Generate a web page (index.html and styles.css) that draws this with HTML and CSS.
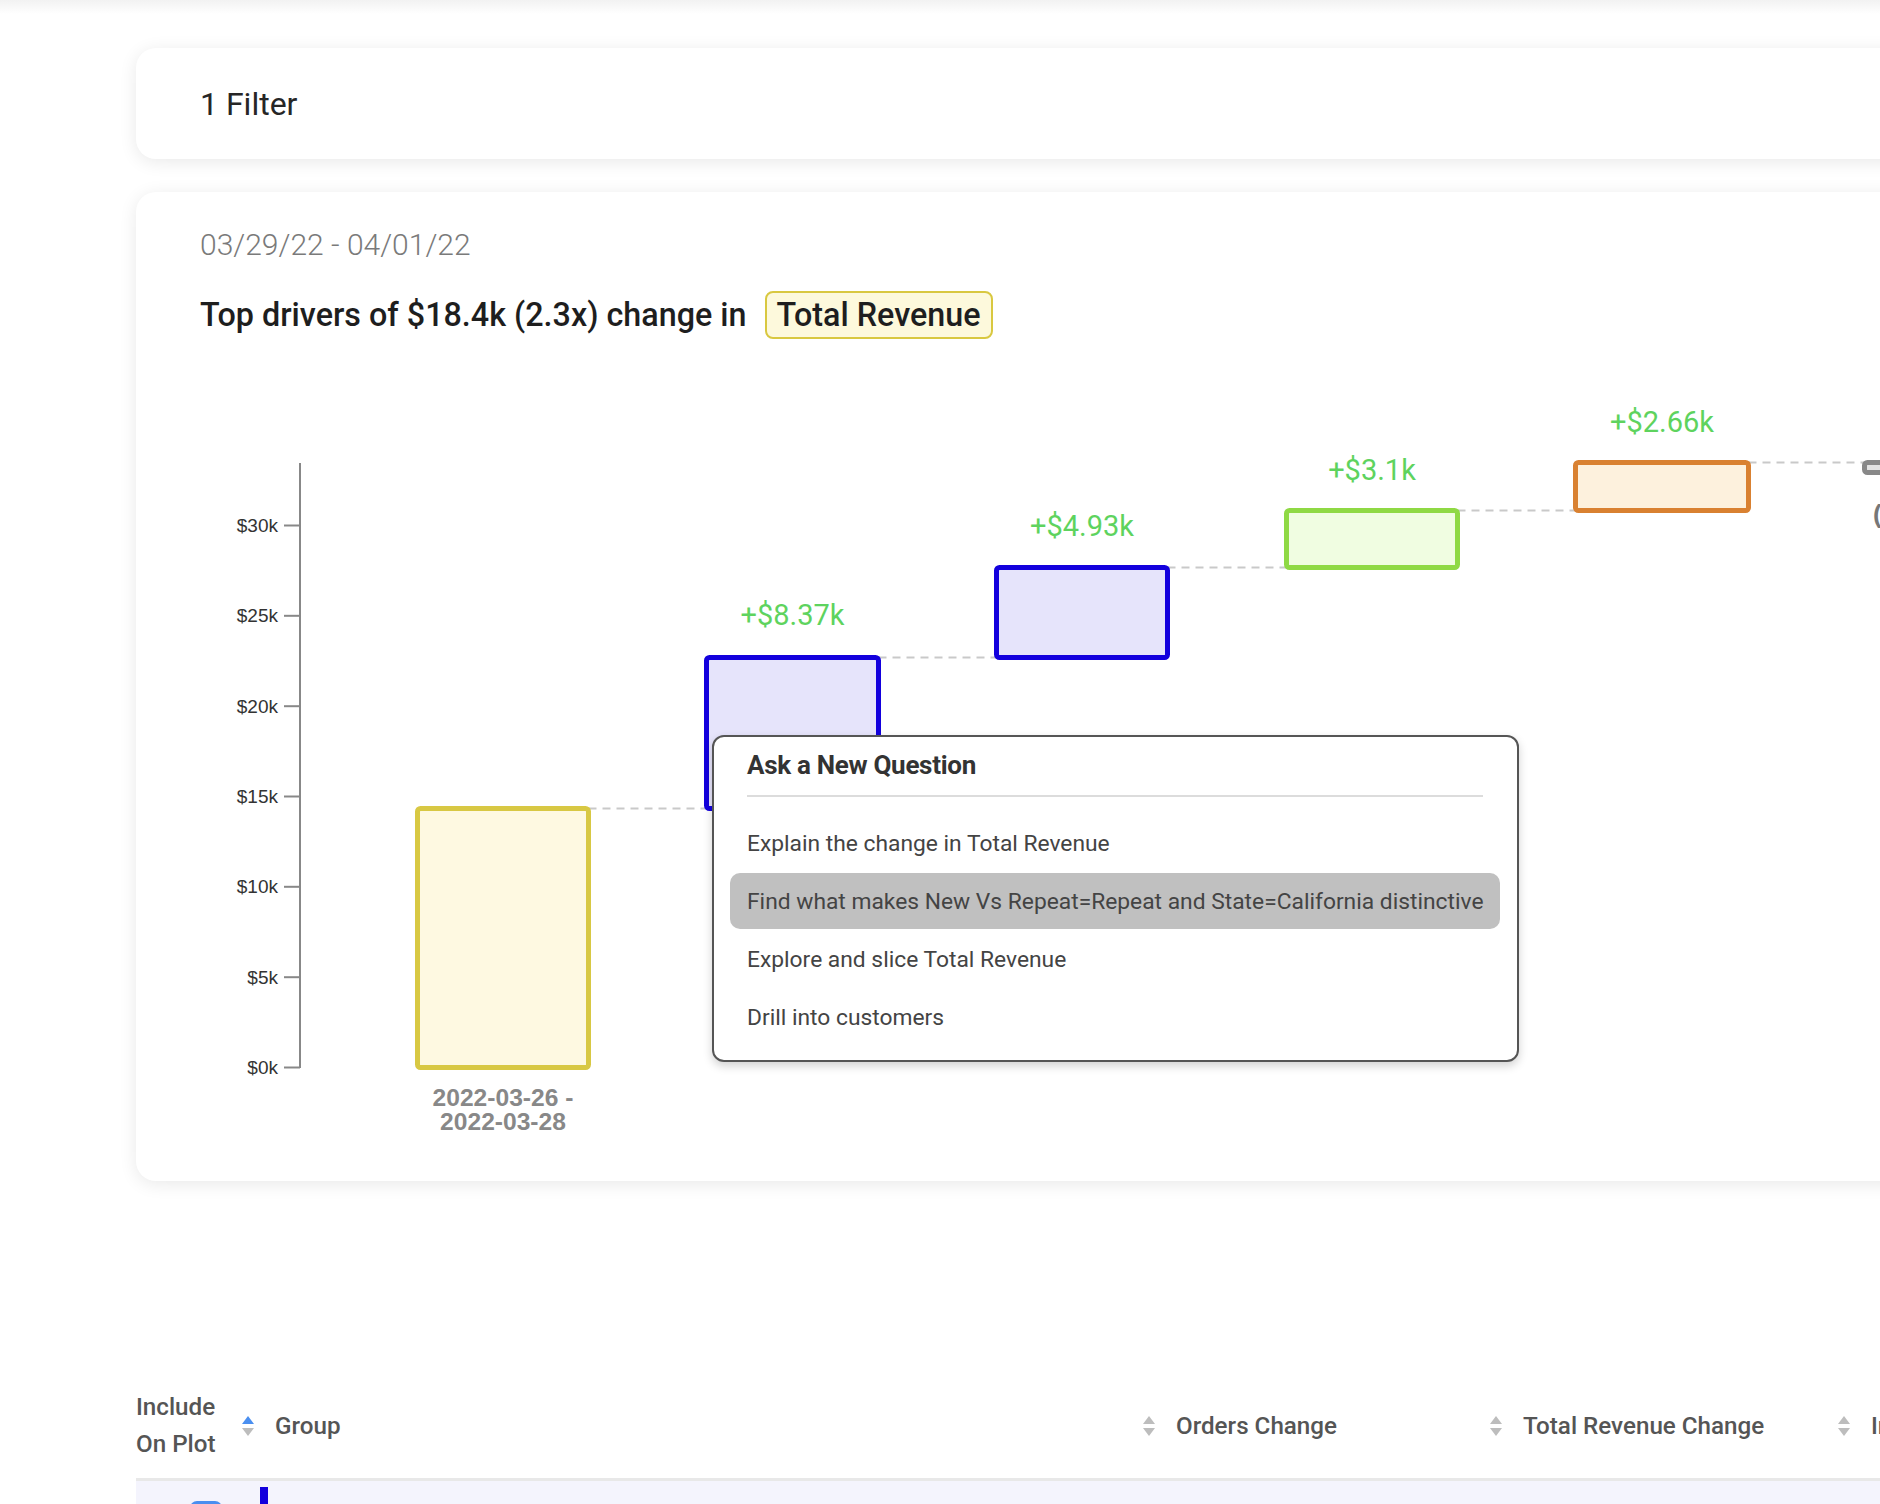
FILE: index.html
```html
<!DOCTYPE html>
<html lang="en">
<head>
<meta charset="utf-8">
<title>Top drivers</title>
<link rel="stylesheet" href="styles.css">
</head>
<body>
<div class="top-fade"></div>
<main class="page">
  <section class="card filter-card">
    <span class="filter-label">1 Filter</span>
  </section>

  <section class="card chart-card">
    <div class="card-head">
      <div class="date-range">03/29/22 - 04/01/22</div>
      <h1 class="title">
        <span>Top drivers of $18.4k (2.3x) change in</span>
        <span class="metric-badge">Total Revenue</span>
      </h1>
    </div>

    <svg class="waterfall" width="1800" height="789" viewBox="0 0 1800 789">
      <g class="axis">
        <line x1="164" y1="71" x2="164" y2="676" />
        <line x1="148" y1="675.5" x2="164" y2="675.5" />
        <line x1="148" y1="585.2" x2="164" y2="585.2" />
        <line x1="148" y1="494.8" x2="164" y2="494.8" />
        <line x1="148" y1="404.5" x2="164" y2="404.5" />
        <line x1="148" y1="314.2" x2="164" y2="314.2" />
        <line x1="148" y1="223.8" x2="164" y2="223.8" />
        <line x1="148" y1="133.5" x2="164" y2="133.5" />
      </g>
      <g class="tick-labels">
        <text x="142" y="682">$0k</text>
        <text x="142" y="592">$5k</text>
        <text x="142" y="501">$10k</text>
        <text x="142" y="411">$15k</text>
        <text x="142" y="321">$20k</text>
        <text x="142" y="230">$25k</text>
        <text x="142" y="140">$30k</text>
      </g>

      <g class="connectors">
        <line x1="452.5" y1="416.5" x2="570.5" y2="416.5" />
        <line x1="742.5" y1="265.5" x2="860.5" y2="265.5" />
        <line x1="1031.5" y1="175.5" x2="1150.5" y2="175.5" />
        <line x1="1321.5" y1="118.5" x2="1439.5" y2="118.5" />
        <line x1="1612.5" y1="70.5" x2="1728.5" y2="70.5" />
      </g>

      <rect class="bar bar-base" x="281.5" y="416.5" width="171" height="259" rx="3" />
      <rect class="bar bar-blue" x="570.5" y="265.5" width="172" height="151" rx="3" />
      <rect class="bar bar-blue" x="860.5" y="175.5" width="171" height="90" rx="3" />
      <rect class="bar bar-green" x="1150.5" y="118.5" width="171" height="57" rx="3" />
      <rect class="bar bar-orange" x="1439.5" y="70.5" width="173" height="48" rx="3" />
      <rect class="bar bar-grey" x="1728.5" y="70.5" width="171" height="10" rx="3" />

      <g class="delta-labels">
        <text x="656.5" y="233">+$8.37k</text>
        <text x="946" y="144">+$4.93k</text>
        <text x="1236" y="88">+$3.1k</text>
        <text x="1526" y="40">+$2.66k</text>
      </g>
      <text class="grey-label" x="1737" y="131">(</text>

      <g class="x-label">
        <text x="367" y="714">2022-03-26 -</text>
        <text x="367" y="738">2022-03-28</text>
      </g>
    </svg>

    <div class="ask-menu">
      <div class="ask-title">Ask a New Question</div>
      <div class="ask-divider"></div>
      <ul class="ask-list">
        <li class="ask-item">Explain the change in Total Revenue</li>
        <li class="ask-item is-active">Find what makes New Vs Repeat=Repeat and State=California distinctive</li>
        <li class="ask-item">Explore and slice Total Revenue</li>
        <li class="ask-item">Drill into customers</li>
      </ul>
    </div>
  </section>

  <section class="table">
    <div class="thead">
      <div class="th th-include">Include<br>On Plot</div>
      <div class="th"><span class="sort"><span class="tri up active"></span><span class="tri down"></span></span>Group</div>
      <div class="th"><span class="sort"><span class="tri up"></span><span class="tri down"></span></span>Orders Change</div>
      <div class="th"><span class="sort"><span class="tri up"></span><span class="tri down"></span></span>Total Revenue Change</div>
      <div class="th"><span class="sort"><span class="tri up"></span><span class="tri down"></span></span>Impact</div>
    </div>
    <div class="trow">
      <div class="td td-include"><span class="checkbox"></span></div>
      <div class="td td-group"><span class="group-swatch"></span></div>
    </div>
  </section>
</main>
</body>
</html>
```

FILE: styles.css
```css
html, body {
  margin: 0;
  padding: 0;
  background: #ffffff;
  overflow: hidden;
  width: 1880px;
  height: 1504px;
}

body {
  font-family: Roboto, "Liberation Sans", sans-serif;
  color: #222;
}

.top-fade {
  height: 14px;
  background: linear-gradient(to bottom, #f2f2f2, #ffffff);
}

.page {
  padding-left: 136px;
  padding-top: 34px;
  width: 1800px;
}

.card {
  background: #fff;
  border-radius: 20px;
  box-shadow: 0 3px 18px rgba(0, 0, 0, 0.09);
}

.filter-card {
  height: 111px;
  display: flex;
  align-items: center;
  padding-left: 64px;
}

.filter-label {
  font-size: 32px;
  font-weight: 400;
  color: #262626;
}

.chart-card {
  position: relative;
  margin-top: 33px;
}

.card-head {
  padding: 36px 64px 0;
  height: 164px;
  box-sizing: border-box;
}

.date-range {
  font-size: 30px;
  font-weight: 300;
  line-height: 34px;
  color: #7a7a7a;
}

.title {
  margin: 29px 0 0;
  display: flex;
  align-items: center;
  gap: 18px;
  font-size: 32.3px;
  font-weight: 500;
  color: #1e1e1e;
  height: 48px;
}

.metric-badge {
  display: inline-flex;
  align-items: center;
  height: 48px;
  box-sizing: border-box;
  padding: 0 10px;
  border: 2px solid #d9c840;
  border-radius: 8px;
  background: #fdf9dc;
  color: #1e1e1e;
}

.waterfall {
  display: block;
  margin-top: 36px;
}

.axis line {
  stroke: #888;
  stroke-width: 2;
}

.tick-labels text {
  font-family: "Liberation Sans", Arial, sans-serif;
  font-size: 19px;
  fill: #333;
  text-anchor: end;
}

.connectors line {
  stroke: #c9c9c9;
  stroke-width: 2;
  stroke-dasharray: 8 6;
}

.bar {
  stroke-width: 5;
}

.bar-base { fill: #fef9e1; stroke: #d8c843; }
.bar-blue { fill: #e6e4fb; stroke: #1300dd; }
.bar-green { fill: #f0fde1; stroke: #8fd944; }
.bar-orange { fill: #fdf1dd; stroke: #d98131; }
.bar-grey { fill: #e2e2e2; stroke: #888; }

.delta-labels text {
  font-family: Roboto, sans-serif;
  font-size: 29px;
  fill: #5ed35e;
  text-anchor: middle;
}

.grey-label {
  font-family: "Liberation Sans", sans-serif;
  font-weight: 700;
  font-size: 26px;
  fill: #777;
}

.x-label text {
  font-family: "Liberation Sans", Arial, sans-serif;
  font-weight: 700;
  font-size: 24.6px;
  fill: #888;
  text-anchor: middle;
}

.ask-menu {
  position: absolute;
  left: 576px;
  top: 543px;
  width: 807px;
  box-sizing: border-box;
  padding: 0 17px 15px 16px;
  background: #fff;
  border: 2px solid #555;
  border-radius: 12px;
  box-shadow: 0 4px 10px rgba(0, 0, 0, 0.18);
}

.ask-title {
  padding: 12px 17px 14px;
  line-height: 32px;
  font-size: 26px;
  font-weight: 700;
  letter-spacing: -0.3px;
  color: #333;
}

.ask-divider {
  height: 2px;
  margin: 0 17px;
  background: #dcdcdc;
}

.ask-list {
  list-style: none;
  margin: 18px 0 0;
  padding: 0;
  display: flex;
  flex-direction: column;
  gap: 2px;
}

.ask-item {
  height: 56px;
  display: flex;
  align-items: center;
  padding: 0 17px;
  border-radius: 10px;
  font-size: 22.8px;
  color: #444;
  white-space: nowrap;
}

.ask-item.is-active {
  background: #c0c0c0;
}

.table {
  margin-top: 193px;
}

.thead {
  display: grid;
  grid-template-columns: 106px 901px 347px 348px 348px;
  align-items: center;
  height: 104px;
  border-bottom: 3px solid #e8e8e8;
}

.th {
  display: flex;
  align-items: center;
  font-size: 24.2px;
  font-weight: 500;
  color: #555;
  white-space: nowrap;
}

.th-include {
  display: block;
  line-height: 37px;
}

.sort {
  display: inline-flex;
  flex-direction: column;
  gap: 4px;
  margin-right: 21px;
}

.tri {
  width: 0;
  height: 0;
  border-left: 6px solid transparent;
  border-right: 6px solid transparent;
}

.tri.up { border-bottom: 8px solid #bdbdbd; }
.tri.down { border-top: 8px solid #bdbdbd; }
.tri.up.active { border-bottom-color: #4a8ff0; }

.trow {
  display: grid;
  grid-template-columns: 106px 901px;
  height: 60px;
  background: #f4f4fd;
}

.td-include {
  padding: 20px 0 0 54px;
}

.checkbox {
  display: block;
  width: 32px;
  height: 32px;
  border-radius: 7px;
  background: #4a8ef0;
}

.td-group {
  padding: 6px 0 0 18px;
}

.group-swatch {
  display: block;
  width: 8px;
  height: 60px;
  background: #1300dd;
}
```
